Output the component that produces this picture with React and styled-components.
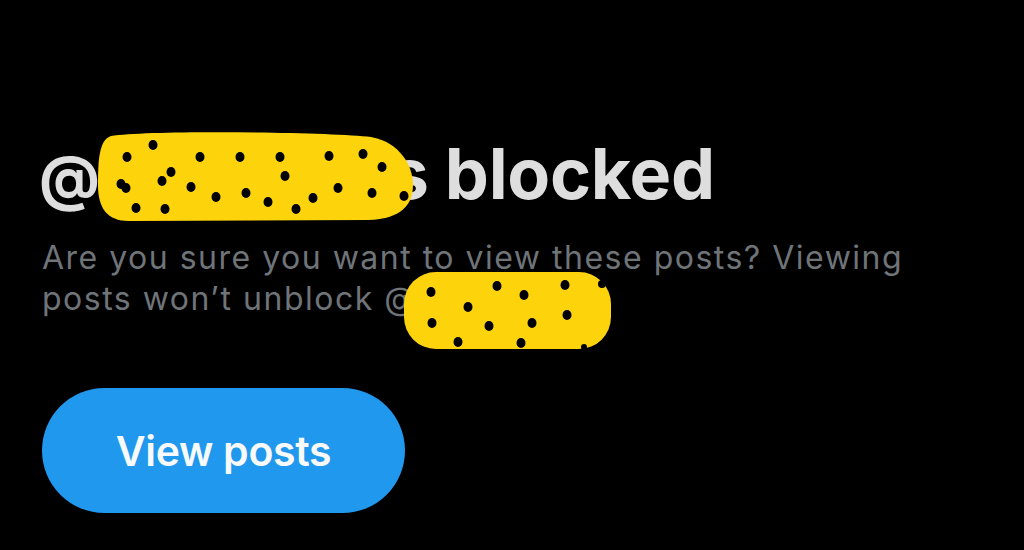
import React from "react";
import styled, { createGlobalStyle } from "styled-components";

const GlobalStyle = createGlobalStyle`
  html, body {
    margin: 0;
    padding: 0;
    background: #000;
  }
  body {
    font-family: Inter, "Noto Sans", sans-serif;
    -webkit-font-smoothing: antialiased;
  }
`;

const Page = styled.div`
  width: 1024px;
  height: 550px;
  box-sizing: border-box;
  padding: 132px 42px 0;
  background: #000;
  overflow: hidden;
  display: flex;
  flex-direction: column;
  align-items: flex-start;
`;

const Title = styled.h1`
  margin: 0 0 0 -3px;
  font-size: 70px;
  font-weight: 700;
  line-height: 84px;
  color: #dedede;
  letter-spacing: -0.3px;
  white-space: nowrap;
`;

const At = styled.span`
  font-size: 60px;
`;

const Subtitle = styled.p`
  margin: 18px 0 0;
  font-size: 32px;
  font-weight: 400;
  line-height: 41px;
  letter-spacing: 1.5px;
  color: #6f7479;
  max-width: 920px;
`;

const Redacted = styled.span`
  position: relative;
  display: inline-block;
  width: ${(p) => p.$w}px;
  white-space: nowrap;
  color: transparent;
`;

const Scribble = styled.svg`
  position: absolute;
  left: ${(p) => p.$x}px;
  top: ${(p) => p.$y}px;
  overflow: visible;
  pointer-events: none;
`;

const ViewButton = styled.button`
  margin-top: 69px;
  width: 363px;
  height: 125px;
  border: none;
  border-radius: 63px;
  background: #1f98ee;
  color: #f7f9fa;
  font-family: Inter, "Noto Sans", sans-serif;
  font-size: 41px;
  font-weight: 600;
  letter-spacing: -0.3px;
  cursor: pointer;
`;

const YELLOW = "#fdd40b";

const titleDots = [
  [59, 20], [33, 32], [106, 32], [146, 32], [186, 32], [235, 31], [269, 29],
  [288, 42], [77, 47], [191, 51], [68, 56], [27, 59], [32, 63], [97, 62],
  [122, 72], [152, 68], [244, 63], [278, 68], [310, 71], [174, 77], [219, 73],
  [42, 83], [71, 84], [202, 84],
];

const nameDots = [
  [30, 23], [96, 17], [123, 26], [164, 16], [67, 38], [31, 54], [88, 57],
  [131, 54], [166, 46], [57, 73], [120, 74],
];

const TitleScribble = ({ x, y }) => (
  <Scribble $x={x} $y={y} width="325" height="100" viewBox="0 0 325 100">
    <path
      d="M 17 11 C 55 5, 235 7, 277 12 C 305 17, 319 40, 319 60 C 319 85, 300 94, 275 95 L 35 96 C 13 96, 4 83, 4 60 C 4 35, 5 15, 17 11 Z"
      fill={YELLOW}
    />
    {titleDots.map(([cx, cy], i) => (
      <ellipse key={i} cx={cx} cy={cy} rx="4.5" ry="5" fill="#000" />
    ))}
  </Scribble>
);

const NameScribble = ({ x, y }) => (
  <Scribble $x={x} $y={y} width="215" height="85" viewBox="0 0 215 85">
    <rect x="3" y="3" width="207" height="77" rx="32" fill={YELLOW} />
    {nameDots.map(([cx, cy], i) => (
      <ellipse key={i} cx={cx} cy={cy} rx="4.5" ry="5" fill="#000" />
    ))}
    <circle cx="201" cy="15" r="4" fill="#000" />
    <circle cx="183" cy="78" r="3" fill="#000" />
  </Scribble>
);

export default function App() {
  return (
    <>
      <GlobalStyle />
      <Page>
        <Title>
          <At>@</At>
          <Redacted $w={290}>
            handle i
            <TitleScribble x={-6} y={-7} />
          </Redacted>
          s blocked
        </Title>
        <Subtitle>
          Are you sure you want to view these posts? Viewing posts won’t
          unblock @
          <Redacted $w={180}>
            handle.
            <NameScribble x={-16} y={-9} />
          </Redacted>
        </Subtitle>
        <ViewButton>View posts</ViewButton>
      </Page>
    </>
  );
}
